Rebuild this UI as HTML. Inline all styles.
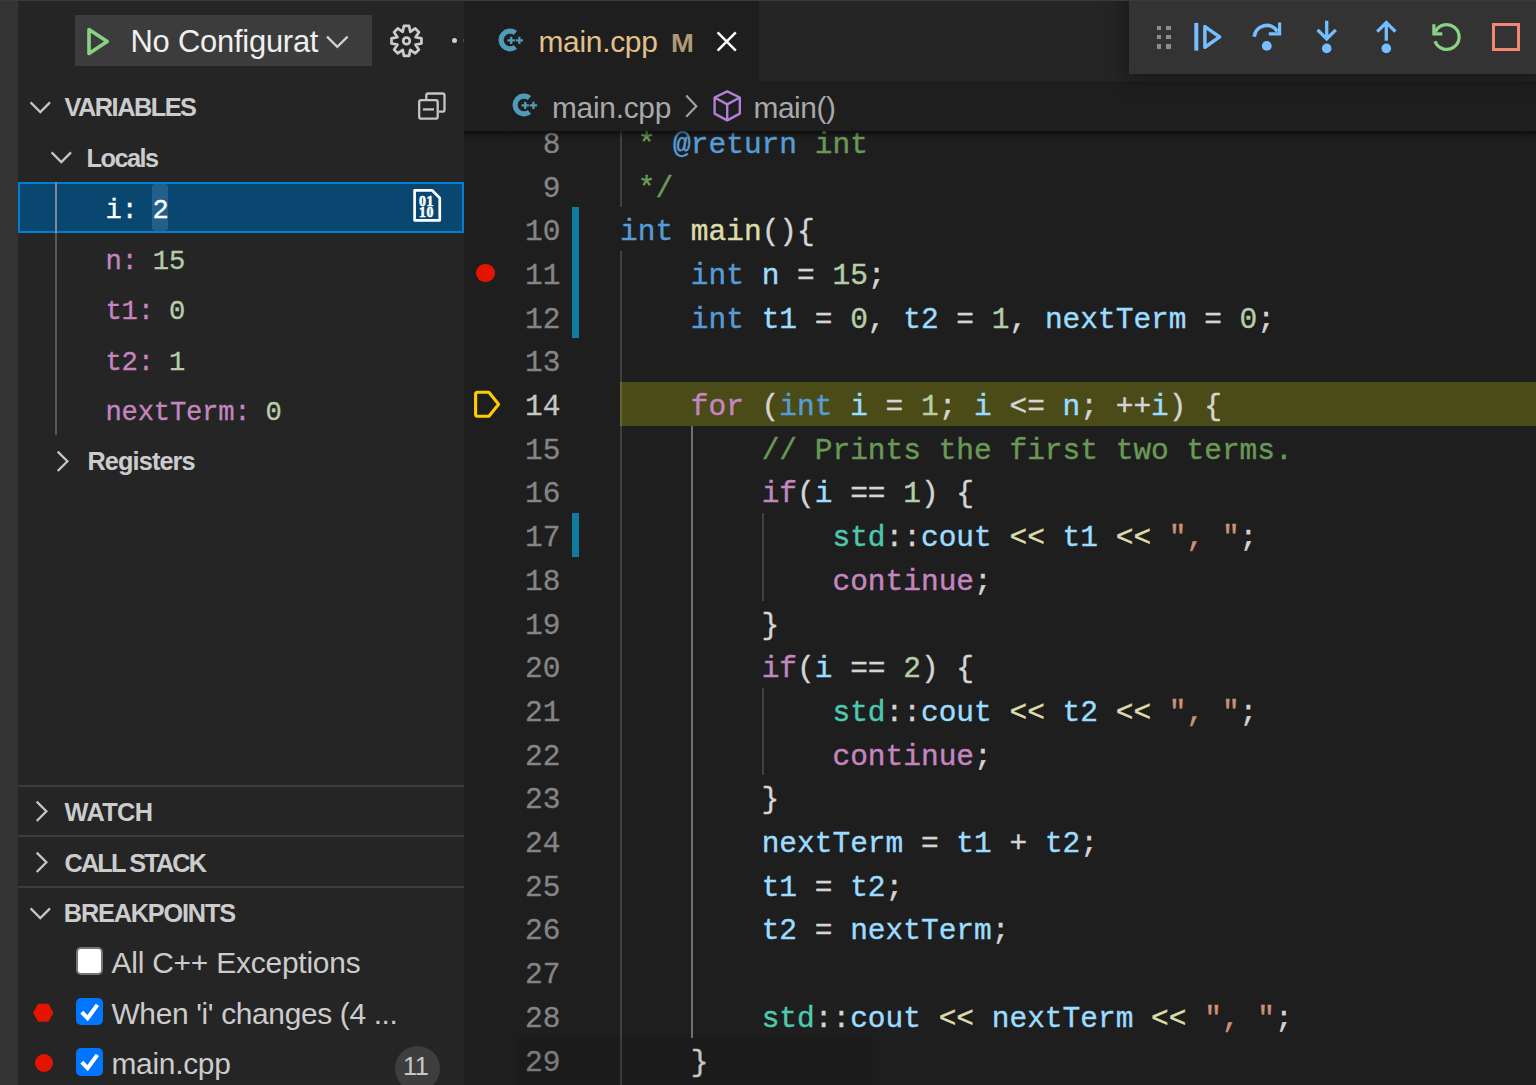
<!DOCTYPE html>
<html>
<head>
<meta charset="utf-8">
<title>main.cpp - Debug</title>
<style>
html,body{margin:0;padding:0;}
body{width:1536px;height:1085px;overflow:hidden;background:#1e1e1e;position:relative;font-family:"Liberation Sans",sans-serif;color:#cccccc;}
.abs{position:absolute;}
svg{position:absolute;overflow:visible;}
.t{position:absolute;white-space:nowrap;line-height:1;}
/* activity bar + sidebar */
#act{left:0;top:0;width:18px;height:1085px;background:#333333;}
#side{left:18px;top:0;width:446px;height:1085px;background:#252526;}
#topline{left:0;top:0;width:1536px;height:1px;background:#3a3a3a;}
.hdr{font-weight:bold;color:#cccccc;}
.mono{font-family:"Liberation Mono",monospace;}
.sep{left:18px;width:446px;height:2px;background:#3c3c3c;}
/* editor */
#tabbar{left:464px;top:1px;width:1072px;height:80px;background:#252526;}
#tab{left:464px;top:1px;width:295px;height:80px;background:#1e1e1e;}
#crumb{left:464px;top:81px;width:1072px;height:50px;background:#1e1e1e;}
#crumbshadow{left:464px;top:131px;width:1072px;height:7px;background:linear-gradient(#000000 0,rgba(0,0,0,0) 100%);opacity:.55;}
.ln{position:absolute;left:464px;width:96.5px;-webkit-text-stroke:0.3px;text-align:right;color:#858585;font-family:"Liberation Mono",monospace;font-size:29.5px;line-height:43.7px;height:43.7px;white-space:pre;}
.cl{position:absolute;left:620px;-webkit-text-stroke:0.4px;color:#d4d4d4;font-family:"Liberation Mono",monospace;font-size:29.5px;line-height:43.7px;height:43.7px;white-space:pre;}
.c{color:#6a9955}.k{color:#569cd6}.f{color:#dcdcaa}.v{color:#9cdcfe}.n{color:#b5cea8}.p{color:#c586c0}.ns{color:#4ec9b0}.s{color:#ce9178}
.ig{position:absolute;width:2.2px;background:#404040;}
.dirty{position:absolute;left:572px;width:7px;background:#0c7d9d;}
/* debug toolbar */
#dbg{left:1129px;top:0;width:407px;height:74px;background:#333333;box-shadow:0 0 18px 4.6px rgba(0,0,0,.36);}
</style>
</head>
<body>
<div id="act" class="abs"></div>
<div id="side" class="abs"></div>

<!-- CODE -->
<div id="code">
<div class="ig" style="left:620.3px;top:120.0px;height:87.4px"></div>
<div class="ig" style="left:620.3px;top:251.1px;height:874.0px"></div>
<div class="ig" style="left:691.1px;top:425.9px;height:611.8px;background:#707070"></div>
<div class="ig" style="left:761.9px;top:513.3px;height:87.4px"></div>
<div class="ig" style="left:761.9px;top:688.1px;height:87.4px"></div>
<div class="abs" id="hl" style="left:620.3px;top:382.2px;width:916px;height:43.7px;background:rgba(255,255,0,0.2);"></div>
<div class="dirty" style="top:207.4px;height:131.1px"></div>
<div class="dirty" style="top:513.3px;height:43.7px"></div>
<div class="ln" style="top:123.8px">8</div>
<div class="cl" style="top:123.8px"><span class="c"> * </span><span class="k">@return</span><span class="c"> int</span></div>
<div class="ln" style="top:167.5px">9</div>
<div class="cl" style="top:167.5px"><span class="c"> */</span></div>
<div class="ln" style="top:211.2px">10</div>
<div class="cl" style="top:211.2px"><span class="k">int</span> <span class="f">main</span>(){</div>
<div class="ln" style="top:254.9px">11</div>
<div class="cl" style="top:254.9px">    <span class="k">int</span> <span class="v">n</span> = <span class="n">15</span>;</div>
<div class="ln" style="top:298.6px">12</div>
<div class="cl" style="top:298.6px">    <span class="k">int</span> <span class="v">t1</span> = <span class="n">0</span>, <span class="v">t2</span> = <span class="n">1</span>, <span class="v">nextTerm</span> = <span class="n">0</span>;</div>
<div class="ln" style="top:342.3px">13</div>
<div class="ln" style="top:386.0px;color:#c6c6c6">14</div>
<div class="cl" style="top:386.0px">    <span class="p">for</span> (<span class="k">int</span> <span class="v">i</span> = <span class="n">1</span>; <span class="v">i</span> &lt;= <span class="v">n</span>; ++<span class="v">i</span>) {</div>
<div class="ln" style="top:429.7px">15</div>
<div class="cl" style="top:429.7px">        <span class="c">// Prints the first two terms.</span></div>
<div class="ln" style="top:473.4px">16</div>
<div class="cl" style="top:473.4px">        <span class="p">if</span>(<span class="v">i</span> == <span class="n">1</span>) {</div>
<div class="ln" style="top:517.1px">17</div>
<div class="cl" style="top:517.1px">            <span class="ns">std</span>::<span class="v">cout</span> <span class="f">&lt;&lt;</span> <span class="v">t1</span> <span class="f">&lt;&lt;</span> <span class="s">", "</span>;</div>
<div class="ln" style="top:560.8px">18</div>
<div class="cl" style="top:560.8px">            <span class="p">continue</span>;</div>
<div class="ln" style="top:604.5px">19</div>
<div class="cl" style="top:604.5px">        }</div>
<div class="ln" style="top:648.2px">20</div>
<div class="cl" style="top:648.2px">        <span class="p">if</span>(<span class="v">i</span> == <span class="n">2</span>) {</div>
<div class="ln" style="top:691.9px">21</div>
<div class="cl" style="top:691.9px">            <span class="ns">std</span>::<span class="v">cout</span> <span class="f">&lt;&lt;</span> <span class="v">t2</span> <span class="f">&lt;&lt;</span> <span class="s">", "</span>;</div>
<div class="ln" style="top:735.6px">22</div>
<div class="cl" style="top:735.6px">            <span class="p">continue</span>;</div>
<div class="ln" style="top:779.3px">23</div>
<div class="cl" style="top:779.3px">        }</div>
<div class="ln" style="top:823.0px">24</div>
<div class="cl" style="top:823.0px">        <span class="v">nextTerm</span> = <span class="v">t1</span> + <span class="v">t2</span>;</div>
<div class="ln" style="top:866.7px">25</div>
<div class="cl" style="top:866.7px">        <span class="v">t1</span> = <span class="v">t2</span>;</div>
<div class="ln" style="top:910.4px">26</div>
<div class="cl" style="top:910.4px">        <span class="v">t2</span> = <span class="v">nextTerm</span>;</div>
<div class="ln" style="top:954.1px">27</div>
<div class="ln" style="top:997.8px">28</div>
<div class="cl" style="top:997.8px">        <span class="ns">std</span>::<span class="v">cout</span> <span class="f">&lt;&lt;</span> <span class="v">nextTerm</span> <span class="f">&lt;&lt;</span> <span class="s">", "</span>;</div>
<div class="ln" style="top:1041.5px">29</div>
<div class="cl" style="top:1041.5px">    }</div>
<div class="abs" id="l29box" style="left:518px;top:1039px;width:353px;height:60px;background:rgba(0,0,0,0.07);box-shadow:0 0 5px 1px rgba(0,0,0,0.07);"></div>
<div class="abs" id="bp" style="left:476.3px;top:263.9px;width:18.5px;height:18.5px;border-radius:50%;background:#e51400;"></div>
<svg id="ptr" style="left:472px;top:388px" width="32" height="32" viewBox="0 0 32 32"><path d="M5.6 4.2 H16.9 L26.6 16.2 L16.9 28.2 H5.6 Q3.6 28.2 3.6 26.2 V6.2 Q3.6 4.2 5.6 4.2 Z" fill="none" stroke="#ffcc00" stroke-width="3.1" stroke-linejoin="round"/></svg>
</div>

<div id="tabbar" class="abs"></div>
<div id="tab" class="abs"></div>
<div id="crumb" class="abs"></div>
<div id="crumbshadow" class="abs"></div>
<div id="dbg" class="abs"></div>
<div id="topline" class="abs"></div>

<div id="topcontent">
<svg style="left:494.2px;top:23.6px" width="32" height="32" viewBox="494.2 23.6 32 32"><path d="M515.68 32.59 A8.9 8.9 0 1 0 515.68 46.61" fill="none" stroke="#519aba" stroke-width="5.2"/><path d="M507.70 40.00 H515.10 M511.40 36.30 V43.70" stroke="#519aba" stroke-width="2.3" fill="none"/><path d="M515.90 40.00 H523.30 M519.60 36.30 V43.70" stroke="#519aba" stroke-width="2.3" fill="none"/></svg>
<div class="t" style="left:538.5px;top:27.19px;font-size:29.9px;letter-spacing:-0.29px;color:#e2c08d">main.cpp</div>
<div class="t" style="left:670.5px;top:31.0px;font-size:25.4px;font-weight:bold;transform:scaleX(1.08);transform-origin:left;color:#b09a75">M</div>
<svg style="left:712px;top:27px" width="30" height="30" viewBox="0 0 30 30"><path d="M5.6 5.4 L23.8 23.6 M23.8 5.4 L5.6 23.6" stroke="#ffffff" stroke-width="2.5" fill="none"/></svg>
<svg style="left:507.79999999999995px;top:89.4px" width="32" height="32" viewBox="507.79999999999995 89.4 32 32"><path d="M529.28 98.39 A8.9 8.9 0 1 0 529.28 112.41" fill="none" stroke="#519aba" stroke-width="5.2"/><path d="M521.30 105.80 H528.70 M525.00 102.10 V109.50" stroke="#519aba" stroke-width="2.3" fill="none"/><path d="M529.50 105.80 H536.90 M533.20 102.10 V109.50" stroke="#519aba" stroke-width="2.3" fill="none"/></svg>
<div class="t" style="left:552px;top:92.99px;font-size:29.9px;letter-spacing:-0.29px;color:#a9a9a9">main.cpp</div>
<svg style="left:680px;top:92px" width="22" height="28" viewBox="0 0 22 28"><path d="M6.2 3.6 L16.3 14.2 L6.2 24.8" fill="none" stroke="#a0a0a0" stroke-width="2.2"/></svg>
<svg style="left:708px;top:86px" width="38" height="40" viewBox="0 0 38 40"><path d="M19.2 5.3 L31.8 11.5 V27.6 L19.2 34.4 L6.6 27.6 V11.5 Z M6.6 11.5 L19.2 18.4 L31.8 11.5 M19.2 18.4 V34.4" fill="none" stroke="#b180d7" stroke-width="2.4" stroke-linejoin="round"/></svg>
<div class="t" style="left:753.5px;top:92.99px;font-size:29.9px;letter-spacing:-0.45px;color:#a9a9a9">main()</div>
<div class="abs" style="left:1156.6px;top:25.5px;width:4.8px;height:4.6px;background:#8c8c8c"></div>
<div class="abs" style="left:1156.6px;top:34.9px;width:4.8px;height:4.6px;background:#8c8c8c"></div>
<div class="abs" style="left:1156.6px;top:44.2px;width:4.8px;height:4.6px;background:#8c8c8c"></div>
<div class="abs" style="left:1165.9px;top:25.5px;width:4.8px;height:4.6px;background:#8c8c8c"></div>
<div class="abs" style="left:1165.9px;top:34.9px;width:4.8px;height:4.6px;background:#8c8c8c"></div>
<div class="abs" style="left:1165.9px;top:44.2px;width:4.8px;height:4.6px;background:#8c8c8c"></div>
<svg style="left:1185px;top:14px" width="46" height="46" viewBox="1185 14 46 46"><path d="M1196.3 22.9 V50.6" stroke="#75beff" stroke-width="4" fill="none"/><path d="M1204.9 26.6 L1219.6 36.9 L1204.9 47.2 Z" stroke="#75beff" stroke-width="3.5" fill="none" stroke-linejoin="round"/></svg>
<svg style="left:1245px;top:14px" width="46" height="46" viewBox="1245 14 46 46"><path d="M1254.2 36.8 A12.6 12.6 0 0 1 1277.5 31.5" stroke="#75beff" stroke-width="3.7" fill="none"/><path d="M1279.6 22.4 V33.9 H1268.8" stroke="#75beff" stroke-width="3.2" fill="none"/><circle cx="1266.8" cy="45.9" r="4.9" fill="#75beff"/></svg>
<svg style="left:1305px;top:14px" width="46" height="46" viewBox="1305 14 46 46"><path d="M1326.7 20.8 V38.5 M1317.6 29.8 L1326.7 38.9 L1335.8 29.8" stroke="#75beff" stroke-width="3.3" fill="none"/><circle cx="1326.7" cy="48.4" r="4.8" fill="#75beff"/></svg>
<svg style="left:1365px;top:14px" width="46" height="46" viewBox="1365 14 46 46"><path d="M1386.3 40.8 V22.5 M1377.2 31.6 L1386.3 22.5 L1395.4 31.6" stroke="#75beff" stroke-width="3.3" fill="none"/><circle cx="1386.3" cy="48.4" r="4.8" fill="#75beff"/></svg>
<svg style="left:1425px;top:14px" width="46" height="46" viewBox="1425 14 46 46"><path d="M1435.46 31.76 A12.4 12.4 0 1 1 1435.05 41.24" stroke="#89d185" stroke-width="3.3" fill="none"/><path d="M1433.9 24.3 V33.9 H1442.3" stroke="#89d185" stroke-width="3.2" fill="none"/></svg>
<div class="abs" style="left:1492.2px;top:22.9px;width:28px;height:28px;box-sizing:border-box;border:3.3px solid #f48771;"></div>
</div>

<!-- SIDEBAR CONTENT -->
<div id="sidecontent">
<div class="abs" style="left:75px;top:15.2px;width:297px;height:50.7px;background:#3c3c3c;"></div>
<svg style="left:84px;top:25px" width="30" height="33" viewBox="0 0 30 33"><path d="M5 4.6 L23.2 16.5 L5 28.4 Z" fill="none" stroke="#89d185" stroke-width="3.6" stroke-linejoin="round"/></svg>
<div class="t" style="left:130.5px;top:26.74px;font-size:30.9px;color:#f0f0f0;width:189px;overflow:hidden;letter-spacing:-0.22px;height:42px;">No Configuration</div>
<svg style="left:324px;top:32px" width="28" height="20" viewBox="0 0 28 20"><path d="M3 4.6 L13.3 14.9 L23.6 4.6" fill="none" stroke="#d0d0d0" stroke-width="2.3"/></svg>
<svg style="left:386px;top:21px" width="40" height="40" viewBox="0 0 40 40"><path d="M17.91 4.92 L23.09 4.92 L24.25 10.85 L24.25 10.85 L29.26 7.48 L32.92 11.14 L29.55 16.15 L29.55 16.15 L35.48 17.31 L35.48 22.49 L29.55 23.65 L29.55 23.65 L32.92 28.66 L29.26 32.32 L24.25 28.95 L24.25 28.95 L23.09 34.88 L17.91 34.88 L16.75 28.95 L16.75 28.95 L11.74 32.32 L8.08 28.66 L11.45 23.65 L11.45 23.65 L5.52 22.49 L5.52 17.31 L11.45 16.15 L11.45 16.15 L8.08 11.14 L11.74 7.48 L16.75 10.85 L16.75 10.85 Z" fill="none" stroke="#cccccc" stroke-width="2.7" stroke-linejoin="round"/><circle cx="20.5" cy="19.9" r="3.3" fill="none" stroke="#cccccc" stroke-width="2.7"/></svg>
<div class="abs" style="left:451.9px;top:38.2px;width:5.2px;height:5.2px;border-radius:50%;background:#d0d0d0"></div>
<div class="abs" style="left:462.8px;top:39.3px;width:1.2px;height:3px;background:#4a4a4a"></div>
<svg style="left:26.6px;top:99.5px" width="28" height="18" viewBox="0 0 28 18"><path d="M3.6 2.4 L13.3 12.1 L23 2.4" fill="none" stroke="#c5c5c5" stroke-width="2.3"/></svg>
<div class="t hdr" style="left:64.5px;top:94.88px;font-size:25.3px;letter-spacing:-1.48px;">VARIABLES</div>
<svg style="left:414px;top:88px" width="36" height="36" viewBox="0 0 36 36"><path d="M12.3 11 V7.5 Q12.3 5.5 14.3 5.5 H28.5 Q30.5 5.5 30.5 7.5 V21.7 Q30.5 23.7 28.5 23.7 H25" fill="none" stroke="#c5c5c5" stroke-width="2.3"/><rect x="5.2" y="12.2" width="18.5" height="18.5" rx="2" fill="none" stroke="#c5c5c5" stroke-width="2.3"/><path d="M9 21.4 H20" stroke="#c5c5c5" stroke-width="2.3"/></svg>
<svg style="left:47.6px;top:150.4px" width="28" height="18" viewBox="0 0 28 18"><path d="M3.6 2.4 L13.3 12.1 L23 2.4" fill="none" stroke="#c5c5c5" stroke-width="2.3"/></svg>
<div class="t hdr" style="left:86.5px;top:145.88px;font-size:25.3px;letter-spacing:-1.5px;">Locals</div>
<div class="abs" style="left:18px;top:182px;width:446px;height:51px;background:#094771;box-sizing:border-box;border:2.3px solid #007fd4;"></div>
<div class="abs" style="left:152px;top:184.3px;width:16px;height:46.4px;border-radius:4px;background:#245f8c;"></div>
<div class="abs" style="left:55px;top:182px;width:2px;height:51px;background:#7a8a96;"></div>
<div class="abs" style="left:55px;top:233px;width:2px;height:202px;background:#585858;"></div>
<div class="t mono" style="left:105.5px;top:197.05px;font-size:27.2px;letter-spacing:-0.22px;-webkit-text-stroke:0.3px;color:#ffffff;white-space:pre;">i: <span style="margin-left:-1.3px">2</span></div>
<div class="t mono" style="left:105.5px;top:247.65px;font-size:27.2px;letter-spacing:-0.22px;-webkit-text-stroke:0.3px;white-space:pre;"><span style="color:#c586c0">n:</span> <span style="color:#b5cea8;margin-left:-1px">15</span></div>
<div class="t mono" style="left:105.5px;top:298.25px;font-size:27.2px;letter-spacing:-0.22px;-webkit-text-stroke:0.3px;white-space:pre;"><span style="color:#c586c0">t1:</span> <span style="color:#b5cea8;margin-left:-1px">0</span></div>
<div class="t mono" style="left:105.5px;top:348.85px;font-size:27.2px;letter-spacing:-0.22px;-webkit-text-stroke:0.3px;white-space:pre;"><span style="color:#c586c0">t2:</span> <span style="color:#b5cea8;margin-left:-1px">1</span></div>
<div class="t mono" style="left:105.5px;top:399.45px;font-size:27.2px;letter-spacing:-0.22px;-webkit-text-stroke:0.3px;white-space:pre;"><span style="color:#c586c0">nextTerm:</span> <span style="color:#b5cea8;margin-left:-1px">0</span></div>
<svg style="left:410px;top:186px" width="34" height="40" viewBox="0 0 34 40"><path d="M4.6 4.45 H22.3 L29.75 12 V34.35 H4.6 Z" fill="none" stroke="#ffffff" stroke-width="2.7" stroke-linejoin="round"/><text x="16.6" y="19.6" font-family="Liberation Serif" font-weight="700" font-size="13.8" letter-spacing="0.7" fill="#ffffff" stroke="#ffffff" stroke-width="0.55" text-anchor="middle">01</text><text x="16.6" y="30.9" font-family="Liberation Serif" font-weight="700" font-size="13.8" letter-spacing="0.7" fill="#ffffff" stroke="#ffffff" stroke-width="0.55" text-anchor="middle">10</text></svg>
<svg style="left:54.5px;top:447.5px" width="18" height="28" viewBox="0 0 18 28"><path d="M2.7 3.6 L12.4 13.3 L2.7 23" fill="none" stroke="#c5c5c5" stroke-width="2.3"/></svg>
<div class="t hdr" style="left:87.5px;top:448.78px;font-size:25.3px;letter-spacing:-0.9px;">Registers</div>
<div class="abs sep" style="top:784.7px;height:2.3px"></div>
<div class="abs sep" style="top:835.2px;height:2.3px"></div>
<div class="abs sep" style="top:885.9px;height:2.3px"></div>
<svg style="left:34px;top:798px" width="18" height="28" viewBox="0 0 18 28"><path d="M2.7 3.6 L12.4 13.3 L2.7 23" fill="none" stroke="#c5c5c5" stroke-width="2.3"/></svg>
<div class="t hdr" style="left:64.5px;top:799.58px;font-size:25.3px;letter-spacing:-0.57px;">WATCH</div>
<svg style="left:34px;top:849px" width="18" height="28" viewBox="0 0 18 28"><path d="M2.7 3.6 L12.4 13.3 L2.7 23" fill="none" stroke="#c5c5c5" stroke-width="2.3"/></svg>
<div class="t hdr" style="left:64.5px;top:850.58px;font-size:25.3px;letter-spacing:-1.86px;">CALL STACK</div>
<svg style="left:26.6px;top:905.8px" width="28" height="18" viewBox="0 0 28 18"><path d="M3.6 2.4 L13.3 12.1 L23 2.4" fill="none" stroke="#c5c5c5" stroke-width="2.3"/></svg>
<div class="t hdr" style="left:63.8px;top:901.18px;font-size:25.3px;letter-spacing:-1.19px;">BREAKPOINTS</div>
<div class="abs" style="left:75.5px;top:947.2px;width:27.4px;height:27.6px;box-sizing:border-box;border:2.3px solid #767676;border-radius:5px;background:#ffffff;"></div>
<div class="abs" style="left:75.5px;top:997.7px;width:27.4px;height:27.8px;border-radius:5px;background:#0075ff;"></div><svg style="left:75.5px;top:997.7px" width="28" height="28" viewBox="0 0 28 28"><path d="M5.8 14.2 L11.6 20.2 L21.4 6.9" fill="none" stroke="#ffffff" stroke-width="4.1"/></svg>
<div class="abs" style="left:75.5px;top:1048.3px;width:27.4px;height:27.8px;border-radius:5px;background:#0075ff;"></div><svg style="left:75.5px;top:1048.3px" width="28" height="28" viewBox="0 0 28 28"><path d="M5.8 14.2 L11.6 20.2 L21.4 6.9" fill="none" stroke="#ffffff" stroke-width="4.1"/></svg>
<div class="t" style="left:111.5px;top:948.29px;font-size:29.9px;letter-spacing:-0.2px;">All C++ Exceptions</div>
<div class="t" style="left:111.5px;top:998.69px;font-size:29.9px;letter-spacing:-0.34px;">When 'i' changes (4 ...</div>
<div class="t" style="left:111.5px;top:1049.19px;font-size:29.9px;letter-spacing:-0.29px;">main.cpp</div>
<svg style="left:30px;top:1000px" width="28" height="26" viewBox="0 0 28 26"><path d="M3 12.7 L8.2 3.7 H18.4 L23.6 12.7 L18.4 21.7 H8.2 Z" fill="#e51400"/></svg>
<div class="abs" style="left:35.2px;top:1054.2px;width:18.2px;height:18.2px;border-radius:50%;background:#e51400;"></div>
<div class="abs" style="left:394.7px;top:1045.5px;width:45.2px;height:45.2px;border-radius:50%;background:#3e3e3e;"></div>
<div class="t" style="left:403px;top:1053.78px;font-size:25.3px;letter-spacing:-0.37px;color:#c8c8c8">11</div>
</div>

</body>
</html>
